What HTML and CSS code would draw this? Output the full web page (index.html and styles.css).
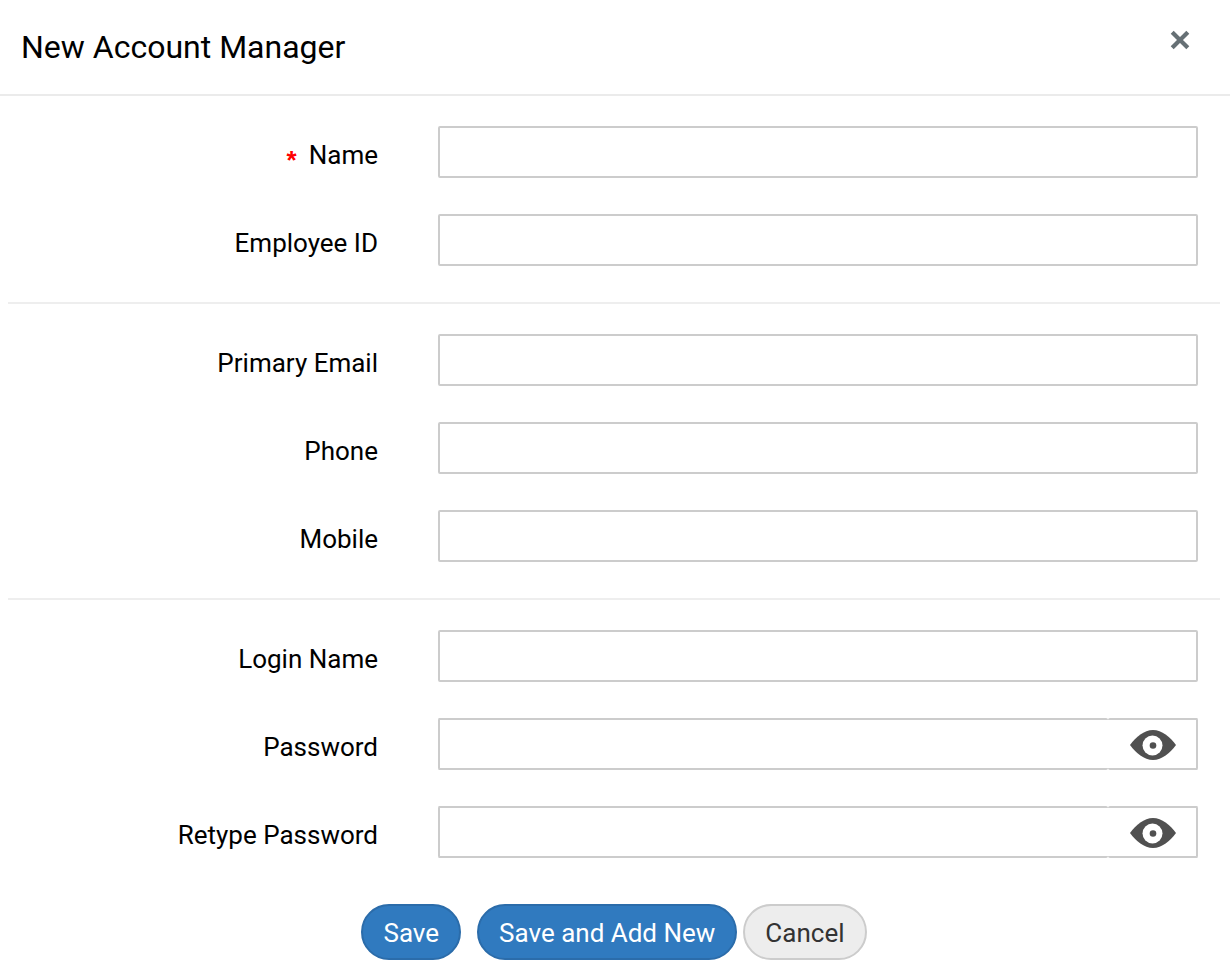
FILE: index.html
```html
<!DOCTYPE html>
<html lang="en">
<head>
    <meta charset="UTF-8">
    <meta name="viewport" content="width=device-width, initial-scale=1.0">
    <title>New Account Manager</title>
    <link rel="stylesheet" href="styles.css">
</head>
<body>
    <header class="header">
        <h1>New Account Manager</h1>
        <button type="button" class="close" aria-label="Close">
            <svg width="20" height="20" viewBox="0 0 20 20">
                <path d="M2.2 2.2 L17.8 17.8 M17.8 2.2 L2.2 17.8" stroke="#667075" stroke-width="4.2" fill="none"/>
            </svg>
        </button>
    </header>

    <form class="form">
        <div class="section">
            <div class="row">
                <label for="name"><span class="required">*</span>Name</label>
                <input type="text" id="name" required>
            </div>
            <div class="row">
                <label for="employee-id">Employee ID</label>
                <input type="text" id="employee-id">
            </div>
        </div>

        <div class="section">
            <div class="row">
                <label for="email">Primary Email</label>
                <input type="email" id="email">
            </div>
            <div class="row">
                <label for="phone">Phone</label>
                <input type="tel" id="phone">
            </div>
            <div class="row">
                <label for="mobile">Mobile</label>
                <input type="tel" id="mobile">
            </div>
        </div>

        <div class="section">
            <div class="row">
                <label for="login">Login Name</label>
                <input type="text" id="login">
            </div>
            <div class="row">
                <label for="password">Password</label>
                <div class="password">
                    <input type="password" id="password">
                    <button type="button" class="eye" aria-label="Show password">
                        <svg width="46" height="30" viewBox="0 0 46 30">
                            <path d="M0 15 C6 7 14 0 23 0 C32 0 40 7 46 15 C40 23 32 30 23 30 C14 30 6 23 0 15 Z" fill="#505050"/>
                            <circle cx="22.5" cy="15.5" r="10" fill="#fff"/>
                            <circle cx="23" cy="15.5" r="3.3" fill="#505050"/>
                        </svg>
                    </button>
                </div>
            </div>
            <div class="row">
                <label for="retype">Retype Password</label>
                <div class="password">
                    <input type="password" id="retype">
                    <button type="button" class="eye" aria-label="Show retyped password">
                        <svg width="46" height="30" viewBox="0 0 46 30">
                            <path d="M0 15 C6 7 14 0 23 0 C32 0 40 7 46 15 C40 23 32 30 23 30 C14 30 6 23 0 15 Z" fill="#505050"/>
                            <circle cx="22.5" cy="15.5" r="10" fill="#fff"/>
                            <circle cx="23" cy="15.5" r="3.3" fill="#505050"/>
                        </svg>
                    </button>
                </div>
            </div>
        </div>

        <div class="actions">
            <button type="submit" class="btn btn-save">Save</button>
            <button type="submit" class="btn">Save and Add New</button>
            <button type="button" class="btn btn-cancel">Cancel</button>
        </div>
    </form>
</body>
</html>
```

FILE: styles.css
```css
* {
    box-sizing: border-box;
}

body {
    margin: 0;
    background: #fff;
    color: #000;
    font-family: Roboto, "Liberation Sans", sans-serif;
    font-size: 26px;
}

button {
    font-family: inherit;
    font-size: inherit;
    cursor: pointer;
}

.header {
    display: flex;
    justify-content: space-between;
    align-items: flex-start;
    padding: 27px 40px 27px 21px;
    border-bottom: 2px solid #ebebeb;
}

h1 {
    margin: 0;
    font-size: 32px;
    font-weight: 400;
    line-height: 40px;
}

.close {
    display: flex;
    margin-top: 3px;
    padding: 0;
    border: none;
    background: none;
}

.form {
    padding: 0 10px 20px 8px;
}

.section {
    padding: 30px 22px 0 0;
}

.section + .section {
    border-top: 2px solid #eee;
}

.row {
    display: grid;
    grid-template-columns: 370px 1fr;
    column-gap: 60px;
    margin-bottom: 36px;
}

label {
    padding-top: 12px;
    line-height: 34px;
    text-align: right;
}

.required {
    margin-right: 12px;
    color: #f00;
    font-family: "Liberation Sans", Arial, sans-serif;
    font-weight: 700;
    line-height: 1;
    vertical-align: -5px;
}

input {
    width: 100%;
    height: 52px;
    padding: 0 12px;
    border: 2px solid #ccc;
    border-radius: 2px;
    background: #fff;
    font-family: inherit;
    font-size: inherit;
}

.password {
    display: flex;
}

.password input {
    flex: 1;
    min-width: 0;
    border-right: none;
}

.eye {
    display: flex;
    justify-content: center;
    align-items: center;
    width: 90px;
    height: 52px;
    padding: 2px 0 0 2px;
    border: 2px solid #ccc;
    border-left: none;
    border-radius: 2px;
    background: #fff;
}

.actions {
    display: flex;
    justify-content: center;
    gap: 6px;
    padding-top: 10px;
}

.btn {
    height: 56px;
    padding: 2px 20px 0;
    border: 2px solid #2b6caa;
    border-radius: 28px;
    background: #307abf;
    color: #fff;
}

.btn-save {
    margin-right: 10px;
}

.btn-cancel {
    border-color: #ccc;
    background: #ededed;
    color: #333;
}
```
